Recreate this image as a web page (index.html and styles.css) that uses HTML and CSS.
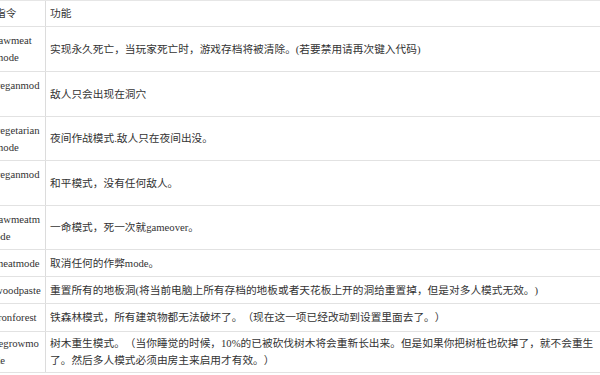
FILE: index.html
```html
<!DOCTYPE html>
<html lang="zh-CN">
<head>
<meta charset="utf-8">
<title>指令</title>
<link rel="stylesheet" href="styles.css">
</head>
<body>
<div class="tbl">
  <div class="row head"><div class="cmd">指令</div><div class="desc">功能</div></div>
  <div class="row"><div class="cmd">rawmeat<br>mode</div><div class="desc">实现永久死亡，当玩家死亡时，游戏存档将被清除。(若要禁用请再次键入代码)</div></div>
  <div class="row"><div class="cmd">veganmod<br>e</div><div class="desc">敌人只会出现在洞穴</div></div>
  <div class="row"><div class="cmd">vegetarian<br>mode</div><div class="desc">夜间作战模式.敌人只在夜间出没。</div></div>
  <div class="row"><div class="cmd">veganmod<br>e</div><div class="desc">和平模式，没有任何敌人。</div></div>
  <div class="row"><div class="cmd">rawmeatm<br>ode</div><div class="desc">一命模式，死一次就gameover。</div></div>
  <div class="row"><div class="cmd">meatmode</div><div class="desc">取消任何的作弊mode。</div></div>
  <div class="row"><div class="cmd">woodpaste</div><div class="desc">重置所有的地板洞(将当前电脑上所有存档的地板或者天花板上开的洞给重置掉，但是对多人模式无效。)</div></div>
  <div class="row"><div class="cmd">ironforest</div><div class="desc">铁森林模式，所有建筑物都无法破坏了。（现在这一项已经改动到设置里面去了。）</div></div>
  <div class="row"><div class="cmd">regrowmo<br>de</div><div class="desc">树木重生模式。（当你睡觉的时候，10%的已被砍伐树木将会重新长出来。但是如果你把树桩也砍掉了，就不会重生<br>了。然后多人模式必须由房主来启用才有效。）</div></div>
</div>
</body>
</html>
```
FILE: styles.css
```css
html, body {
  margin: 0;
  padding: 0;
  overflow: hidden;
  background: #ffffff;
}

body {
  font-family: "Liberation Serif", "Noto Sans CJK SC", serif;
  font-size: 10.7px;
  line-height: 17px;
  color: #333333;
  text-spacing-trim: space-all;
}

.tbl {
  margin-left: -9px;
  width: 720px;
  border-top: 1px solid #e6e6e6;
}

.row {
  display: grid;
  grid-template-columns: 55px 1fr;
  box-sizing: border-box;
  border-bottom: 1px solid #e2e2e2;
}

.cmd, .desc {
  display: flex;
  align-items: center;
  white-space: nowrap;
}

.cmd {
  box-sizing: border-box;
  padding-left: 4px;
  border-right: 1px solid #dcdcdc;
}

.desc {
  padding-left: 4px;
}

.head { height: 26px; }
.row:nth-child(2) { height: 45px; }
.row:nth-child(3) { height: 45px; }
.row:nth-child(4) { height: 44px; }
.row:nth-child(5) { height: 45px; }
.row:nth-child(6) { height: 44px; }
.row:nth-child(7) { height: 27px; }
.row:nth-child(8) { height: 27px; }
.row:nth-child(9) { height: 28px; }
.row:nth-child(10) { height: 41px; }
```
